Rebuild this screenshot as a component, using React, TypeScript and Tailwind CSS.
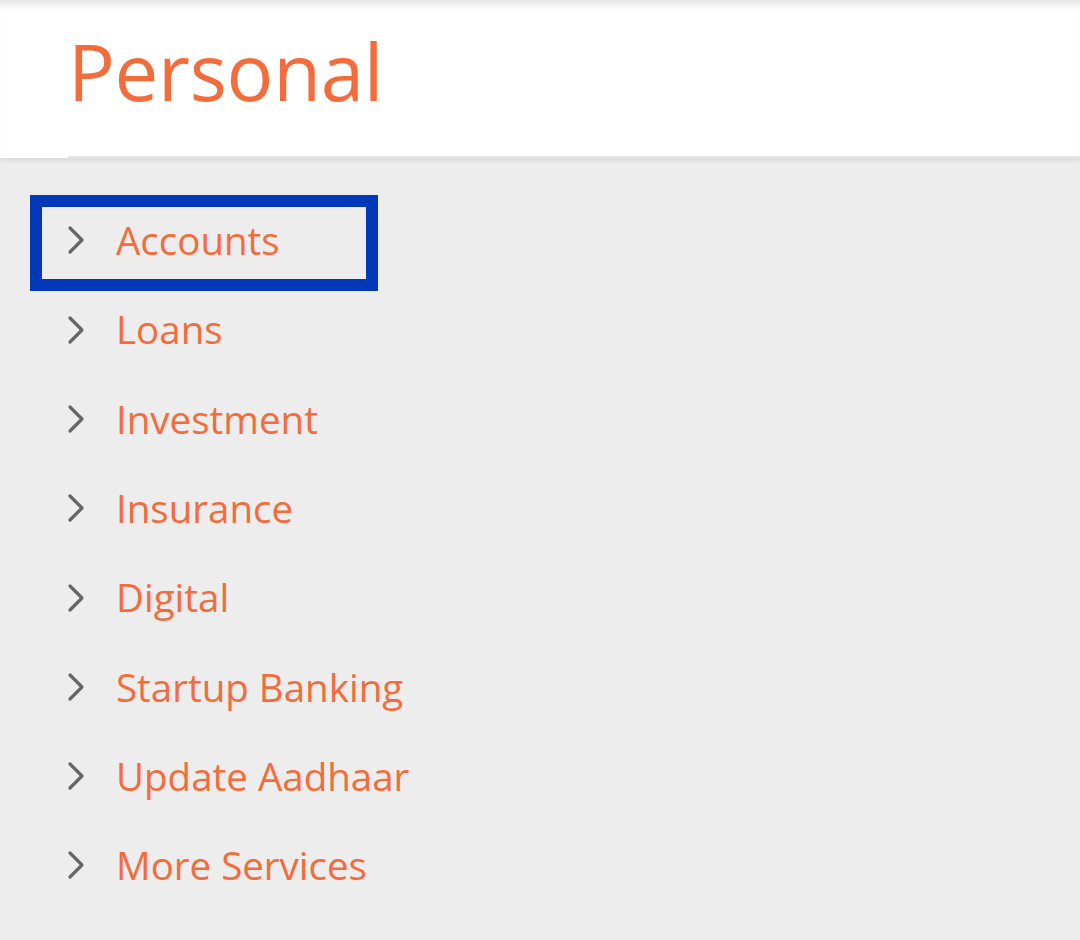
const items = [
  "Accounts",
  "Loans",
  "Investment",
  "Insurance",
  "Digital",
  "Startup Banking",
  "Update Aadhaar",
  "More Services",
];

function Chevron() {
  return (
    <svg width="18" height="30" viewBox="0 0 18 30" className="shrink-0">
      <path d="M3 3 L15 15 L3 27" fill="none" stroke="#666666" strokeWidth="3.2" strokeLinecap="round" strokeLinejoin="round" />
    </svg>
  );
}

export default function App() {
  return (
    <div className="w-[1080px] h-[940px] bg-[#ededed] overflow-hidden font-['Open_Sans',sans-serif]">
      {/* Header */}
      <div className="relative bg-white h-[158px] shadow-[inset_0_10px_10px_-6px_rgba(0,0,0,0.12),0_3px_4px_rgba(0,0,0,0.08)]">
        <div className="ml-[68px] h-full border-b-2 border-[#e6e6e6] pt-[16px]">
          <h1 className="text-[78px] leading-[110px] text-[#f36c3b] tracking-[-0.3px]">Personal</h1>
        </div>
      </div>

      {/* Menu */}
      <nav className="pt-[37px] pl-[30px] flex flex-col">
        {items.map((item, i) => (
          <div
            key={item}
            className={
              i === 0
                ? "h-[96px] w-[348px] border-[12px] border-[#0038b8] flex items-center pl-[25px] pb-[6px] -mb-[6px]"
                : "h-[89.3px] flex items-center pl-[37px]"
            }
          >
            <Chevron />
            <span className="ml-[31px] text-[38.5px] leading-none text-[#f36c3b]">{item}</span>
          </div>
        ))}
      </nav>
    </div>
  );
}
